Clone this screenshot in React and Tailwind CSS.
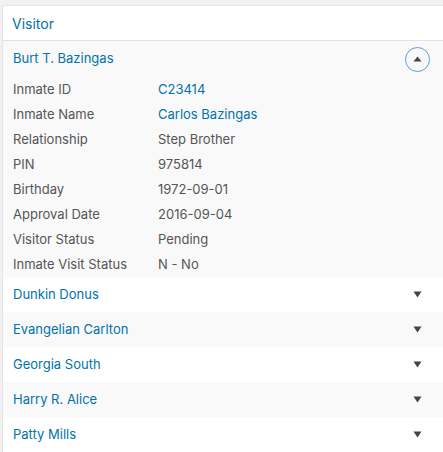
const details = [
  ['Inmate ID', 'C23414', true],
  ['Inmate Name', 'Carlos Bazingas', true],
  ['Relationship', 'Step Brother'],
  ['PIN', '975814'],
  ['Birthday', '1972-09-01'],
  ['Approval Date', '2016-09-04'],
  ['Visitor Status', 'Pending'],
  ['Inmate Visit Status', 'N - No'],
];

const others = ['Dunkin Donus', 'Evangelian Carlton', 'Georgia South', 'Harry R. Alice', 'Patty Mills'];

const Caret = () => (
  <svg width="9" height="7" viewBox="0 0 9 7">
    <path d="M0.5 0.5h8L4.5 6.5z" fill="#444" />
  </svg>
);

export default function App() {
  return (
    <div className="h-[452px] overflow-hidden bg-[#f1f1f1] pt-[5px] pl-[2px]" style={{ fontFamily: 'Inter, "Liberation Sans", sans-serif' }}>
      <div className="w-[460px] border border-[#e5e5e5] bg-white text-[13px]">
        {/* header */}
        <div className="h-[35px] flex items-center px-[9px] border-b border-[#e1e1e1] text-[14px] text-[#0073aa]">
          Visitor
        </div>

        {/* expanded visitor */}
        <div className="bg-[#f9f9f9]">
          <div className="h-[36px] flex items-center justify-between pl-[10px] pr-[31px]">
            <span className="text-[#0073aa]">Burt T. Bazingas</span>
            <span className="w-[25px] h-[25px] rounded-full border-[1.5px] border-[#5b9dd9] flex items-center justify-center">
              <svg width="9" height="6" viewBox="0 0 9 6">
                <path d="M0.5 5.5h8L4.5 0.5z" fill="#444" />
              </svg>
            </span>
          </div>
          <div>
            {details.map(([label, value, link]) => (
              <div key={label} className="h-[25px] flex items-center pl-[10px] text-[#555]">
                <span className="w-[145px]">{label}</span>
                <span className={link ? 'text-[#0073aa]' : ''}>{value}</span>
              </div>
            ))}
          </div>
        </div>

        {/* collapsed visitors */}
        {others.map((name, i) => (
          <div key={name} className={`h-[35px] flex items-center justify-between pl-[10px] pr-[39px] ${i % 2 ? 'bg-[#f9f9f9]' : 'bg-white'}`}>
            <span className="text-[#0073aa]">{name}</span>
            <Caret />
          </div>
        ))}
      </div>
    </div>
  );
}
